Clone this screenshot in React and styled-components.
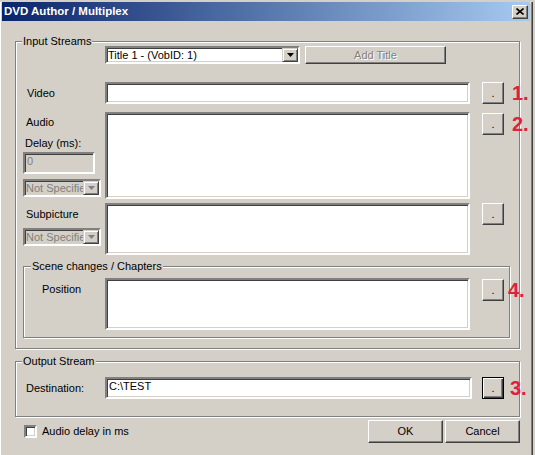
import styled, { createGlobalStyle } from "styled-components";

const GlobalStyle = createGlobalStyle`
  html, body {
    margin: 0;
    padding: 0;
    background: #d4d0c8;
    overflow: hidden;
  }
  body {
    font-family: "Liberation Sans", Arial, sans-serif;
    font-size: 11px;
    color: #000;
  }
  * {
    box-sizing: border-box;
  }
`;

const Window = styled.div`
  width: 533px;
  height: 458px;
  background: #d4d0c8;
  box-shadow: inset -1px -1px 0 #404040, inset -2px -2px 0 #808080,
    inset 1px 1px 0 #fff;
`;

const TitleBar = styled.div`
  height: 19px;
  margin: 2px 3px 0 2px;
  padding: 0 2px 0 2px;
  display: flex;
  align-items: center;
  justify-content: space-between;
  background: linear-gradient(to right, #0a246a, #a6caf0);
`;

const TitleText = styled.span`
  color: #fff;
  font-weight: bold;
  font-size: 11.5px;
  line-height: 13px;
`;

const CloseButton = styled.div`
  width: 16px;
  height: 14px;
  display: flex;
  align-items: center;
  justify-content: center;
  background: #d4d0c8;
  border: 1px solid;
  border-color: #fff #404040 #404040 #fff;
  box-shadow: inset -1px -1px 0 #808080;
`;

const Body = styled.div`
  padding: 0 13px 0 15px;
`;

const Group = styled.div`
  position: relative;
  border: 1px solid #808080;
  box-shadow: inset 1px 1px 0 #fff, 1px 1px 0 #fff;
  margin: ${(p) => p.$margin};
  padding: ${(p) => p.$padding};
`;

const Legend = styled.span`
  position: absolute;
  top: -7px;
  left: ${(p) => p.$left}px;
  padding: 0 1px;
  line-height: 13px;
  background: #d4d0c8;
  white-space: nowrap;
`;

const ButtonSlot = styled.div`
  position: relative;
  width: 22px;
  margin-top: ${(p) => p.$top || 0}px;
`;

const Row = styled.div`
  display: grid;
  grid-template-columns: ${(p) => p.$label}px ${(p) => p.$field}px ${(p) =>
      22 + p.$gap}px;
  align-items: start;
  margin-top: ${(p) => p.$top || 0}px;

  & > ${ButtonSlot} {
    margin-left: ${(p) => p.$gap}px;
  }
`;

const TopRow = styled.div`
  display: flex;
  gap: 5px;
  margin-left: 89px;
`;

const LabelCell = styled.div`
  align-self: ${(p) => (p.$center ? "center" : "start")};
  display: flex;
  flex-direction: column;
  align-items: flex-start;
`;

const Label = styled.span`
  line-height: 13px;
  padding-left: ${(p) => p.$indent || 0}px;
  margin-top: ${(p) => p.$top || 0}px;
  white-space: nowrap;
`;

const Sunken = styled.div`
  height: ${(p) => p.$h}px;
  width: ${(p) => (p.$w ? `${p.$w}px` : "auto")};
  margin-top: ${(p) => p.$top || 0}px;
  margin-left: ${(p) => p.$left || 0}px;
  border: 2px solid;
  border-color: #808080 #fff #fff #808080;
  box-shadow: inset 1px 1px 0 #404040, inset -1px -1px 0 #d4d0c8;
  background: ${(p) => (p.$disabled ? "#d4d0c8" : "#fff")};
  color: ${(p) => (p.$disabled ? "#808080" : "#000")};
  padding: 1px 2px;
  line-height: 13px;
  overflow: hidden;
  white-space: nowrap;
`;

const Combo = styled(Sunken)`
  display: flex;
  align-items: center;
  padding: 0 0 0 1px;
`;

const ComboText = styled.span`
  flex: 1;
  overflow: hidden;
  white-space: nowrap;
  line-height: 13px;
`;

const ArrowButton = styled.div`
  width: 16px;
  height: 100%;
  flex: none;
  display: flex;
  align-items: center;
  justify-content: center;
  background: #d4d0c8;
  border: 1px solid;
  border-color: #d4d0c8 #404040 #404040 #d4d0c8;
  box-shadow: inset 1px 1px 0 #fff, inset -1px -1px 0 #808080;
`;

const Button = styled.button`
  width: ${(p) => p.$w}px;
  height: ${(p) => p.$h}px;
  padding: 0;
  margin: 0;
  background: #d4d0c8;
  font: 11px "Liberation Sans", Arial, sans-serif;
  line-height: 13px;
  color: ${(p) => (p.disabled ? "#808080" : "#000")};
  text-shadow: ${(p) => (p.disabled ? "1px 1px 0 #fff" : "none")};
  border: 1px solid;
  border-color: ${(p) =>
    p.$default ? "#000" : "#fff #404040 #404040 #fff"};
  box-shadow: ${(p) =>
    p.$default
      ? "inset 1px 1px 0 #fff, inset -1px -1px 0 #404040, inset -2px -2px 0 #808080"
      : "inset -1px -1px 0 #808080"};
`;

const Marker = styled.span`
  position: absolute;
  left: calc(100% + ${(p) => p.$offset}px);
  top: 50%;
  transform: translateY(-50%);
  font: bold 20px "Liberation Sans", Arial, sans-serif;
  line-height: 20px;
  color: #e0203c;
  white-space: nowrap;
`;

const Footer = styled.div`
  display: flex;
  align-items: center;
  height: 23px;
  margin-top: 3px;
`;

const CheckWrap = styled.label`
  display: flex;
  align-items: center;
  gap: 5px;
  padding-left: 9px;
  line-height: 13px;
`;

const CheckBox = styled.span`
  width: 13px;
  height: 13px;
  border: 2px solid;
  border-color: #808080 #fff #fff #808080;
  box-shadow: inset 1px 1px 0 #404040, inset -1px -1px 0 #d4d0c8;
  background: #fff;
`;

const Spacer = styled.div`
  flex: 1;
`;

const ButtonGroup = styled.div`
  display: flex;
  gap: 2px;
`;

function DownArrow({ color = "#000" }) {
  return (
    <svg width="7" height="4" viewBox="0 0 7 4">
      <polygon points="0,0 7,0 3.5,4" fill={color} />
    </svg>
  );
}

function Browse({ marker, offset, top, isDefault }) {
  return (
    <ButtonSlot $top={top}>
      <Button $w={22} $h={22} $default={isDefault}>
        .
      </Button>
      {marker && <Marker $offset={offset}>{marker}</Marker>}
    </ButtonSlot>
  );
}

function Select({ top, children }) {
  return (
    <Combo $h={18} $w={78} $top={top} $left={7} $disabled>
      <ComboText>{children}</ComboText>
      <ArrowButton>
        <DownArrow color="#808080" />
      </ArrowButton>
    </Combo>
  );
}

export default function App() {
  return (
    <>
      <GlobalStyle />
      <Window>
        <TitleBar>
          <TitleText>DVD Author / Multiplex</TitleText>
          <CloseButton>
            <svg width="8" height="7" viewBox="0 0 8 7">
              <path d="M0.5 0.5 L7.5 6.5 M7.5 0.5 L0.5 6.5" stroke="#000" strokeWidth="1.6" />
            </svg>
          </CloseButton>
        </TitleBar>

        <Body>
          <Group $margin="20px 0 0 0" $padding="4px 0 10px 0">
            <Legend $left={6}>Input Streams</Legend>

            <TopRow>
              <Combo $h={18} $w={195}>
                <ComboText>Title 1 - (VobID: 1)</ComboText>
                <ArrowButton>
                  <DownArrow />
                </ArrowButton>
              </Combo>
              <Button $w={141} $h={18} disabled>
                Add Title
              </Button>
            </TopRow>

            <Row $label={89} $field={365} $gap={12} $top={18}>
              <LabelCell $center>
                <Label $indent={11}>Video</Label>
              </LabelCell>
              <Sunken $h={22} />
              <Browse marker="1." offset={8} />
            </Row>

            <Row $label={89} $field={365} $gap={12} $top={8}>
              <LabelCell>
                <Label $indent={10} $top={4}>Audio</Label>
                <Label $indent={9} $top={8}>Delay (ms):</Label>
                <Sunken $h={22} $w={72} $top={2} $left={7} $disabled>
                  0
                </Sunken>
                <Select top={5}>Not Specified</Select>
              </LabelCell>
              <Sunken $h={87} />
              <Browse marker="2." offset={8} top={1} />
            </Row>

            <Row $label={89} $field={365} $gap={12} $top={4}>
              <LabelCell>
                <Label $indent={10} $top={5}>Subpicture</Label>
                <Select top={7}>Not Specified</Select>
              </LabelCell>
              <Sunken $h={52} />
              <Browse />
            </Row>

            <Group $margin="11px 9px 0 7px" $padding="11px 0 7px 0">
              <Legend $left={7}>Scene changes / Chapters</Legend>
              <Row $label={81} $field={365} $gap={12}>
                <LabelCell>
                  <Label $indent={18} $top={5}>Position</Label>
                </LabelCell>
                <Sunken $h={52} />
                <Browse marker="4." offset={4} top={1} />
              </Row>
            </Group>
          </Group>

          <Group $margin="12px 0 0 0" $padding="15px 0 17px 0">
            <Legend $left={6}>Output Stream</Legend>
            <Row $label={89} $field={367} $gap={10}>
              <LabelCell $center>
                <Label $indent={10}>Destination:</Label>
              </LabelCell>
              <Sunken $h={22}>C:\TEST</Sunken>
              <Browse marker="3." offset={6} isDefault />
            </Row>
          </Group>

          <Footer>
            <CheckWrap>
              <CheckBox />
              Audio delay in ms
            </CheckWrap>
            <Spacer />
            <ButtonGroup>
              <Button $w={75} $h={23}>OK</Button>
              <Button $w={75} $h={23}>Cancel</Button>
            </ButtonGroup>
          </Footer>
        </Body>
      </Window>
    </>
  );
}
